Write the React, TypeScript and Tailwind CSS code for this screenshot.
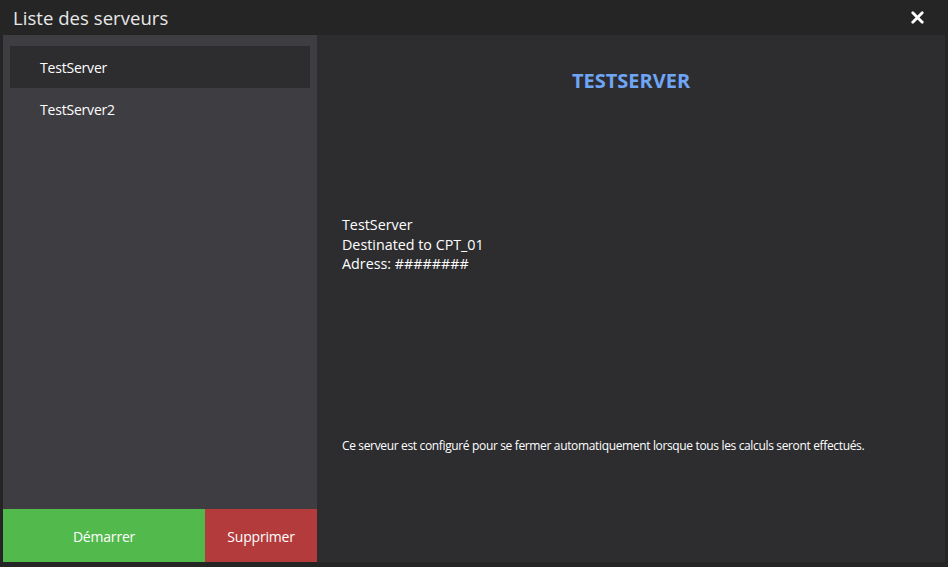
import { X } from "lucide-react";

const servers = ["TestServer", "TestServer2"];

const App = () => {
	const selected = 0;

	return (
		<div
			className="flex h-[567px] w-[948px] flex-col bg-[#252526] px-[3px] pb-[5px] text-white"
			style={{ fontFamily: '"Open Sans", "Noto Sans", sans-serif' }}
		>
			<div className="flex h-[35px] shrink-0 items-center justify-between pl-[10px] pr-[18px]">
				<span className="text-[18.5px] tracking-[0.05px] text-[#e8e8e8]">Liste des serveurs</span>
				<X size={19} strokeWidth={3.5} className="text-white" />
			</div>
			<div className="flex min-h-0 flex-1">
				<div className="flex w-[314px] flex-col bg-[#3e3d42]">
					<ul className="flex flex-1 flex-col px-[7px] pt-[11px]">
						{servers.map((name, i) => (
							<li
								key={name}
								className={
									"flex h-[42px] items-center pl-[30px] text-[14px] tracking-[-0.2px] " +
									(i === selected ? "bg-[#2d2d30]" : "")
								}
							>
								{name}
							</li>
						))}
					</ul>
					<div className="flex h-[53px] text-[14px] tracking-[-0.2px]">
						<button type="button" className="flex w-[202px] items-center justify-center bg-[#52b94c] pt-[2px]">
							Démarrer
						</button>
						<button type="button" className="flex flex-1 items-center justify-center bg-[#b33b3b] pt-[2px]">
							Supprimer
						</button>
					</div>
				</div>
				<div className="flex flex-1 flex-col bg-[#2d2d30] pl-[25px]">
					<h1 className="mt-[31px] pr-[25px] text-center text-[20px] font-bold text-[#6fa5f5]">
						TESTSERVER
					</h1>
					<div className="mt-[119px] text-[14.3px] leading-[19.5px]">
						<p>TestServer</p>
						<p>Destinated to CPT_01</p>
						<p>Adress: ########</p>
					</div>
					<p className="mt-[163px] text-[12px] tracking-[-0.35px]">
						Ce serveur est configuré pour se fermer automatiquement lorsque tous les calculs seront effectués.
					</p>
				</div>
			</div>
		</div>
	);
};

export default App;
